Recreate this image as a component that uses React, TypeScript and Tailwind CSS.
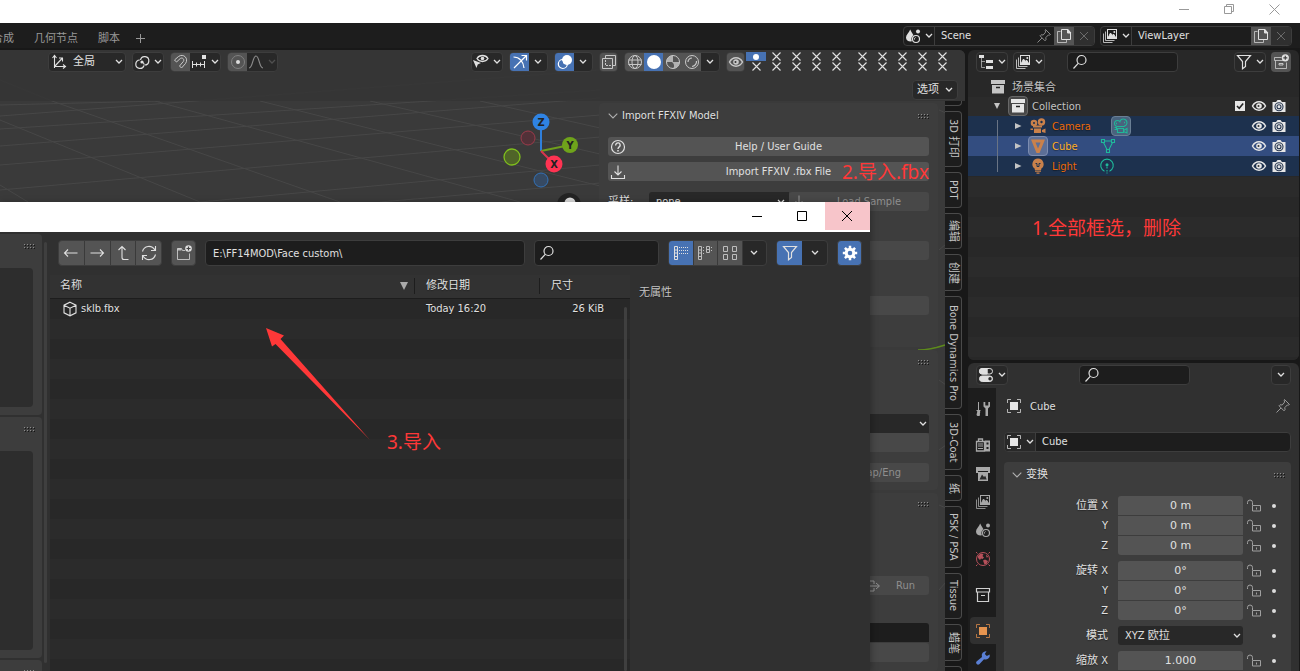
import React from "react";
import type { ReactNode } from "react";

function Icon({ children, className = "" }: { children: ReactNode; className?: string }) {
  return (
    <svg
      viewBox="0 0 16 16"
      width={16}
      height={16}
      fill="none"
      stroke="currentColor"
      strokeWidth="1"
      aria-hidden="true"
      className={"shrink-0 " + className}
    >
      {children}
    </svg>
  );
}

function Chevron({ className = "" }: { className?: string }) {
  return (
    <svg viewBox="0 0 8 6" width="8" height="6" fill="none" stroke="currentColor" strokeWidth="1.3" aria-hidden="true" className={"shrink-0 " + className}>
      <path d="M1 1l3 3 3-3" />
    </svg>
  );
}

const PanelArrow = () => (
  <svg viewBox="0 0 10 6" width="10" height="6" fill="none" stroke="#b0b0b0" strokeWidth="1.1" aria-hidden="true" className="-mr-0.5 shrink-0">
    <path d="M.7 .7L5 5 9.3 .7" />
  </svg>
);

const SearchIcon = () => (
  <Icon>
    <circle cx="9.5" cy="6" r="4.5" strokeWidth="1.2" />
    <path d="M6.2 9.4L1.5 14.5" strokeWidth="1.2" />
  </Icon>
);
const PinIcon = () => (
  <Icon>
    <path d="M9.5 1.5l5 5-1.2.6-1-.1-2.5 2.6.2 2.2-1 1L4 7.8l1-1 2.2.2L9.7 4l-.5-1.2zM6 10l-4.5 4.5" />
  </Icon>
);
const CopyIcon = () => (
  <Icon>
    <path d="M4.5 3.5h-3v11h9v-3" opacity=".7" />
    <path d="M5.5 1.5h6l3 3v7h-9z" />
    <path d="M11.5 1v4H15z" fill="currentColor" />
  </Icon>
);
const CloseIcon = () => (
  <Icon>
    <path d="M4 4l8 8M12 4l-8 8" />
  </Icon>
);
const ScenePic = () => (
  <Icon>
    <path d="M5.2 1.5C6.5 4.5 9 7 9 9.5a3.8 3.8 0 01-3.2 4C3 13.5 1 12 1 9.5 1 7 4 4.5 5.2 1.5z" fill="currentColor" stroke="none" />
    <circle cx="11" cy="11" r="4.6" fill="#1f1f1f" stroke="none" />
    <circle cx="11" cy="11" r="3.5" strokeWidth="1.2" />
    <path d="M9.5 11.5a1.7 1.7 0 011-2" />
    <circle cx="13" cy="3.5" r="2" fill="currentColor" stroke="none" />
  </Icon>
);
const LayersPic = () => (
  <Icon>
    <path d="M1.5 5.5v9h9M3.5 3.5v9h9" opacity=".8" />
    <rect x="5.5" y="1.5" width="9" height="9" />
    <path d="M6 10l2.5-5 1.8 2.5L11.5 6l2.5 4z" fill="currentColor" />
    <circle cx="12.3" cy="4" r="1" fill="currentColor" stroke="none" />
  </Icon>
);
const OutlinerPic = () => (
  <Icon>
    <g fill="currentColor" stroke="none">
      <rect x="1" y="1" width="5" height="3" />
      <rect x="8" y="6" width="7" height="3" />
      <rect x="8" y="12" width="7" height="3" />
    </g>
    <path d="M3.5 4v9.5H7M3.5 7.5H7" opacity=".6" />
  </Icon>
);
const FunnelIcon = () => (
  <Icon>
    <path d="M1.5 1.5h13l-5 6v5l-3 2.2V7.5z" strokeWidth="1.2" />
  </Icon>
);
const ArchiveNewIcon = () => (
  <Icon>
    <path d="M1.5 3.5h7M1.5 3.5v3h12M2.5 6.5v8h11v-6" opacity=".7" />
    <path d="M6 9.5h4v1.5H6z" opacity=".8" />
    <circle cx="12.3" cy="3.8" r="3.6" fill="currentColor" stroke="none" />
    <path d="M12.3 1.8v4M10.3 3.8h4" stroke="#444" strokeWidth="1.2" />
  </Icon>
);
const ArchiveSolid = () => (
  <Icon>
    <path d="M1 1h14v4H1zM2 6h12v8.5H2z" fill="currentColor" stroke="none" />
    <path d="M6 8.5h4" stroke="#222" strokeWidth="1.5" />
  </Icon>
);
const EyeIcon = () => (
  <Icon>
    <path d="M1.5 8c3-5.6 10-5.6 13 0-3 5.6-10 5.6-13 0z" strokeWidth="1.5" />
    <circle cx="8" cy="8" r="2.8" fill="currentColor" stroke="none" />
    <circle cx="7.5" cy="8" r="1" fill="#333" stroke="none" />
  </Icon>
);
const PhotoIcon = () => (
  <Icon>
    <path d="M2 4h3l1.5-2h3L11 4h3.5v10h-13V4z" fill="currentColor" stroke="none" />
    <circle cx="8" cy="8.7" r="4" stroke="#26364f" strokeWidth="1.1" />
    <circle cx="8" cy="8.7" r="2" stroke="#26364f" strokeWidth="1.1" />
  </Icon>
);
const CameraSolid = () => (
  <Icon>
    <g fill="currentColor" stroke="none">
      <circle cx="4" cy="5" r="3.3" />
      <circle cx="11.5" cy="4" r="3.7" />
      <path d="M3 7.5h9V9.5H3zM4 10.5h7V15H4zM12 12l3.5-1.5V15L12 14zM.5 10.500H3V12H.5z" />
    </g>
    <circle cx="4" cy="5" r="1" fill="#1d314e" stroke="none" />
    <circle cx="11.5" cy="4" r="1.2" fill="#1d314e" stroke="none" />
  </Icon>
);
const CameraLine = () => (
  <Icon>
    <path d="M3.5 8.3a3 3 0 113.4-4.6 3.6 3.6 0 116.1 3.4L11 8.5H3.500M4.5 10.5h6v4h-6zM10.5 12.5l3.5-2V15l-3.5-1.5M1.5 9.5h2v2h-2" strokeWidth="1.1" />
    <path d="M3 5.500h1M11 4.500h1" strokeWidth="1.5" />
  </Icon>
);
const MeshSolid = () => (
  <Icon>
    <path d="M1 1.5h14L9.5 15h-3zM5.500 4.500L8 10.500l2.500-6z" fill="currentColor" fillRule="evenodd" stroke="none" />
  </Icon>
);
const MeshLine = () => (
  <Icon>
    <path d="M1.5 1.500h3v3h-3zM11.5 1.500h3v3h-3zM6.5 11.500h3v3h-3zM4.5 3h7M3.5 4.500l3.5 7M12.5 4.500l-3.5 7" strokeWidth="1.1" />
  </Icon>
);
const LightSolid = () => (
  <Icon>
    <path d="M8 .5a5.600 5.600 0 013.200 10.200V12H4.800v-1.300A5.600 5.600 0 018 .5zM5 12.600h6v1.200H5zM6.500 14.500h3v1.200h-3z" fill="currentColor" stroke="none" />
    <path d="M5.500 5.500h1.500v3h2v-3h1.500" stroke="#1d314e" />
  </Icon>
);
const LightLine = () => (
  <Icon>
    <path d="M5.500 13.200A6.300 6.300 0 1110.500 13.200M8 8.500v2M8 12v1.500M8 14.500v1" strokeWidth="1.100" />
    <circle cx="8" cy="6.700" r="1.500" fill="currentColor" stroke="none" />
  </Icon>
);
const ObjectIcon = ({ fill = "#e6e6e6" }: { fill?: string }) => (
  <Icon>
    <path d="M1.5 5V1.5H5M11 1.5h3.5V5M14.5 11v3.5H11M5 14.5H1.5V11" opacity=".75" />
    <rect x="4" y="4" width="8" height="8" fill={fill} stroke="none" />
  </Icon>
);
const LockOpen = () => (
  <Icon className="text-[#a0a0a0]">
    <path d="M1.500 6V4.500a2.500 2.500 0 015 0V7" />
    <path d="M6.500 7.500h8v5.500h-8zM10.500 9.500v2" />
  </Icon>
);
const Arrow = ({ d }: { d: string }) => (
  <Icon>
    <path d={d} strokeWidth="1.1" />
  </Icon>
);
const GlobeIcon = () => (
  <Icon>
    <circle cx="8" cy="8" r="6.5" />
    <ellipse cx="8" cy="8" rx="3" ry="6.5" />
    <path d="M1.5 6h13M1.5 10.5h13" />
  </Icon>
);
const Grip = () => (
  <svg viewBox="0 0 11 5" width="11" height="5" aria-hidden="true" className="shrink-0 text-[#8c8c8c]">
    {[0, 3, 6, 9].map((x) => (
      <g key={x} fill="currentColor">
        <rect x={x} y="0" width="1" height="1" />
        <rect x={x} y="3" width="1" height="1" />
        <rect x={x + 1} y="1" width="1" height="1" fill="#151515" />
        <rect x={x + 1} y="4" width="1" height="1" fill="#151515" />
      </g>
    ))}
  </svg>
);

const BOX = "flex h-5 items-center rounded border border-[#3d3d3d] bg-[#282828]";

function DropButton({ icon, label }: { icon: ReactNode; label: string }) {
  return (
    <button aria-label={label} className="flex h-5 w-8 items-center justify-center gap-1 rounded border border-[#3d3d3d] bg-[#282828]">
      {icon}
      <Chevron />
    </button>
  );
}

function SearchBox({ className, label }: { className: string; label: string }) {
  return (
    <label className={"flex items-center rounded border border-[#3d3d3d] bg-[#1d1d1d] pl-1 " + className}>
      <SearchIcon />
      <input type="search" aria-label={label} className="w-full min-w-0 bg-transparent pl-1 outline-none" />
    </label>
  );
}

function Segment({ label, on, icon, width = "w-[19px]" }: { label: string; on?: boolean; icon: ReactNode; width?: string }) {
  return (
    <button
      aria-label={label}
      aria-pressed={!!on}
      className={"flex h-full items-center justify-center " + width + (on ? " bg-[#4772b3] text-white" : " bg-[#545454] text-[#c8c8c8]")}
    >
      {icon}
    </button>
  );
}

function SegmentMenu({ label }: { label: string }) {
  return (
    <button aria-label={label} className="flex w-[18px] justify-center">
      <Chevron />
    </button>
  );
}

function DataBlock({ icon, name, pin }: { icon: ReactNode; name: string; pin?: boolean }) {
  return (
    <div className="flex h-5 w-48 items-stretch overflow-hidden rounded border border-[#3d3d3d] bg-[#1d1d1d]">
      <button aria-label={name + " list"} className="flex w-[31px] items-center justify-center gap-1 border-r border-[#3d3d3d]">
        {icon}
        <Chevron />
      </button>
      <input aria-label={name} defaultValue={name} className="w-full min-w-0 flex-1 bg-transparent px-1.5 outline-none" />
      {pin && (
        <button aria-label="Pin" className="mr-0.5 text-[#8a8a8a]">
          <PinIcon />
        </button>
      )}
      <button aria-label="New" className="flex w-5 items-center justify-center bg-[#545454]">
        <CopyIcon />
      </button>
      <button aria-label="Remove" className="flex w-5 items-center justify-center bg-[#2f2f2f] text-[#6a6a6a]">
        <CloseIcon />
      </button>
    </div>
  );
}

function LayerGrid({ first }: { first?: boolean }) {
  return (
    <div className="grid grid-cols-5">
      {[0, 1, 2, 3, 4, 5, 6, 7, 8, 9].map((i) => (
        <button
          key={i}
          aria-label={"Layer " + (i + 1)}
          className={"flex h-[9px] w-5 items-center justify-center " + (first && i === 0 ? "bg-[#4772b3]" : "")}
        >
          {first && i === 0 ? (
            <span className="size-1.5 rounded-full bg-white" />
          ) : (
            <svg viewBox="0 0 9 9" width="9" height="9" stroke="currentColor" strokeWidth="1.1" aria-hidden="true">
              <path d="M.5 .5l8 8M8.5 .5l-8 8" />
            </svg>
          )}
        </button>
      ))}
    </div>
  );
}

function TopBar() {
  return (
    <nav className="flex h-[27px] shrink-0 items-center justify-between border-b-2 border-[#181818] bg-[#1d1d1d]">
      <div className="-ml-2 flex items-center gap-5 pt-1.5 text-[#989898]">
        <button className="whitespace-nowrap">合成</button>
        <button className="whitespace-nowrap">几何节点</button>
        <button className="whitespace-nowrap">脚本</button>
        <button aria-label="Add workspace" className="-ml-1">
          <svg viewBox="0 0 9 9" width="9" height="9" stroke="currentColor" aria-hidden="true">
            <path d="M4.5 0v9M0 4.5h9" />
          </svg>
        </button>
      </div>
      <div className="flex gap-[5px] pr-2">
        <DataBlock icon={<ScenePic />} name="Scene" pin />
        <DataBlock icon={<LayersPic />} name="ViewLayer" />
      </div>
    </nav>
  );
}

function ViewportHeader() {
  return (
    <header className="relative h-[51px] shrink-0 bg-[#353535]/90 pt-0.5">
      <div className="flex items-center justify-between pr-[13px] pl-12">
        <div className="flex gap-1.5">
          <div className={BOX + " relative w-[78px]"}>
            <Icon className="ml-0.5">
              <path d="M3.5 14V2M1.5 4l2-2.500 2 2.500M3.500 12.500H14M12 10.500l2.500 2-2.500 2M4 12l7-7.500M8 4h3.500v3.500" strokeWidth="1.1" />
            </Icon>
            <select aria-label="Transform orientation" className="absolute inset-0 w-full appearance-none bg-transparent pl-6 outline-none">
              <option>全局</option>
            </select>
            <Chevron className="mr-0.5 ml-auto" />
          </div>
          <DropButton
            label="Pivot"
            icon={
              <Icon>
                <path d="M5.8 6a4.200 4.200 0 104.200 5.500M6.500 6a4.200 4.200 0 114 5M10 10.500a4.200 4.200 0 00-.8-2" strokeWidth="1.200" />
                <circle cx="8" cy="8" r="1.6" fill="currentColor" stroke="none" />
              </Icon>
            }
          />
          <div className={BOX + " overflow-hidden"}>
            <Segment
              label="Snap"
              icon={
                <Icon>
                  <path d="M1.500 6l4-3.500c5-3.500 10.500 2 7 7L8.500 14l-2-2 3.800-4.500c1.500-2-.8-4.500-3-3L3.500 8z" />
                </Icon>
              }
            />
            <button aria-label="Snap options" className="flex w-[30px] items-center justify-center gap-1">
              <Icon>
                <path d="M1.5 7v7M13.5 7v7M1.5 10.500h12M5.500 8.500v4M9.500 8.500v4" />
                <rect x="11" y="1" width="4" height="4" fill="currentColor" stroke="none" />
              </Icon>
              <Chevron />
            </button>
          </div>
          <div className={BOX + " overflow-hidden"}>
            <Segment
              label="Proportional editing"
              icon={
                <Icon>
                  <circle cx="8" cy="8" r="6.5" stroke="#808080" />
                  <circle cx="8" cy="8" r="2" fill="#ddd" stroke="none" />
                </Icon>
              }
            />
            <button aria-label="Falloff" className="flex w-[30px] items-center justify-center gap-1 text-[#8a8a8a]">
              <Icon>
                <path d="M1 14c4 0 3.500-12 7-12s3 12 7 12" strokeWidth="1.2" />
              </Icon>
              <Chevron className="opacity-40" />
            </button>
          </div>
        </div>

        <div className="flex">
          <div className="mr-px flex gap-1.5">
            <DropButton
              label="Selectability"
              icon={
                <Icon>
                  <path d="M4 4.500c2.500-4 8.500-4 11 0-2.500 4-8.500 4-11 0z" strokeWidth="1.3" />
                  <circle cx="9.500" cy="4.500" r="1.800" fill="currentColor" stroke="none" />
                  <path d="M0 6l8 3-3.300 1.500L3.500 14z" fill="currentColor" stroke="none" />
                </Icon>
              }
            />
            <div className={BOX + " overflow-hidden"}>
              <Segment
                on
                label="Gizmos"
                icon={
                  <Icon>
                    <path d="M1.500 3c6 0 10 4.500 10.500 11M2 14L14 2M9.500 1.500h5v5" strokeWidth="1.2" />
                  </Icon>
                }
              />
              <SegmentMenu label="Gizmo options" />
            </div>
            <div className={BOX + " overflow-hidden"}>
              <Segment
                on
                label="Overlays"
                icon={
                  <Icon>
                    <circle cx="10" cy="6" r="5" fill="currentColor" stroke="none" />
                    <circle cx="5.800" cy="10" r="4.500" strokeWidth="1.2" />
                    <path d="M5.500 7.500a4 4 0 003 4.500" stroke="#4772b3" />
                  </Icon>
                }
              />
              <SegmentMenu label="Overlay options" />
            </div>
            <div className={BOX + " overflow-hidden"}>
              <Segment
                label="X-ray"
                width="w-[17px]"
                icon={
                  <Icon>
                    <path d="M4.500 1.500h10v10h-3M4.500 1.500v3" />
                    <path d="M1.500 4.500h10v10h-10z" />
                    <path d="M4.500 6v5.500H10" strokeDasharray="2 1" />
                  </Icon>
                }
              />
            </div>
            <div className={BOX + " overflow-hidden"}>
              <Segment label="Wireframe" icon={<GlobeIcon />} />
              <Segment
                on
                label="Solid"
                icon={
                  <Icon>
                    <circle cx="8" cy="8" r="7" fill="currentColor" stroke="none" />
                  </Icon>
                }
              />
              <Segment
                label="Material preview"
                icon={
                  <Icon>
                    <circle cx="8" cy="8" r="6.5" />
                    <path d="M8 1.500V8h6.500A6.500 6.500 0 018 14.500c2-2 1-5-1-6.500H1.500A6.500 6.500 0 018 1.500z" fill="currentColor" opacity=".8" stroke="none" />
                  </Icon>
                }
              />
              <Segment
                label="Rendered"
                icon={
                  <Icon>
                    <circle cx="8" cy="8" r="6.5" />
                    <path d="M12.500 7A5 5 0 018 12.500M4 8a4 4 0 014-4" strokeWidth="1.2" />
                  </Icon>
                }
              />
              <SegmentMenu label="Shading options" />
            </div>
            <div className={BOX + " overflow-hidden"}>
              <Segment label="Visibility" width="w-[17px]" icon={<EyeIcon />} />
            </div>
          </div>
          <div className="flex gap-1.5">
            <LayerGrid first />
            <LayerGrid />
          </div>
        </div>
      </div>
      <div className="mt-2 flex justify-end pr-[7px]">
        <button className="flex h-5 w-[46px] items-center justify-center gap-1.5 rounded border border-[#3d3d3d] bg-[#282828] whitespace-nowrap">
          选项
          <Chevron />
        </button>
      </div>
    </header>
  );
}

function ViewportScene() {
  return (
    <svg className="absolute inset-0 h-full w-full" aria-hidden="true">
      <g stroke="#474747" strokeWidth="1" fill="none">
        <path d="M0 55L160 51M0 66L600 20M0 79L600 40M0 96L600 48M0 115L600 65M0 140L600 87M200 152L600 115M380 152L600 133" />
        <path d="M0 70L200 152M52 51L340 152M155 51L520 152M260 51L600 136M370 51L600 104M480 51L600 78M0 135L28 152M0 30L52 51" />
        <path d="M939 60l7 3M939 200l7-6M939 330l7 5M939 400l7-5M939 455l7 3M939 540l7-8" />
      </g>
      <path d="M918 300c10 0 18-2 27-5" stroke="#5d8a1c" fill="none" strokeWidth="1.5" />
      <g strokeWidth="2" fill="none">
        <path d="M541 101V72" stroke="#2f7fdb" />
        <path d="M541 101l29-6" stroke="#6f9f1c" />
        <path d="M541 101l13 13" stroke="#d8354f" />
      </g>
      <circle cx="528" cy="88" r="7" fill="#523138" stroke="#9c3a4a" />
      <circle cx="512" cy="107" r="8" fill="#4f6428" stroke="#7fbf1d" strokeWidth="1.3" />
      <circle cx="541" cy="130" r="7" fill="#364a63" stroke="#3372b8" />
      <circle cx="541" cy="72" r="8.5" fill="#2f83e3" />
      <circle cx="570" cy="95" r="8" fill="#6fa31b" />
      <circle cx="554" cy="114" r="8.5" fill="#ff3352" />
      <g fontSize="11" fontWeight="bold" textAnchor="middle" fill="#222" className="[text-shadow:none]">
        <text x="541" y="76">Z</text>
        <text x="570" y="99">Y</text>
        <text x="554" y="118">X</text>
      </g>
      <circle cx="569" cy="155" r="12" fill="#232323" />
      <circle cx="570" cy="153" r="5.5" fill="#dcdcdc" />
    </svg>
  );
}

function WideButton({ icon, label, off }: { icon?: ReactNode; label?: string; off?: boolean }) {
  return (
    <button
      aria-label={label || "Option"}
      className={"flex h-[19px] w-full items-center rounded-[3px] " + (off ? "bg-[#484848] text-[#8f8f8f]" : "bg-[#545454]")}
    >
      <span className="flex w-5 justify-center">{icon}</span>
      <span className="flex-1 text-center">{label}</span>
    </button>
  );
}

const downloadIcon = (
  <Icon>
    <path d="M8 1.500v9M4.500 7.500L8 11l3.500-3.500M1.500 11v3.500h13V11" strokeWidth="1.1" />
  </Icon>
);

const sideTabs: [string, string][] = [
  ["3D 打印", "h-14"],
  ["PDT", "h-9"],
  ["编辑", "h-9"],
  ["创建", "h-[37px]"],
  ["Bone Dynamics Pro", "h-[113px]"],
  ["3D-Coat", "h-14"],
  ["纸", "h-[26px]"],
  ["PSK / PSA", "h-[62px]"],
  ["Tissue", "h-[46px]"],
  ["蜡笔", "h-[37px]"],
];

function Viewport() {
  return (
    <main className="relative flex min-w-0 flex-1 flex-col overflow-hidden rounded-tr-md bg-[#3a3a3a]">
      <ViewportScene />
      <ViewportHeader />
      <div className="relative flex min-h-0 flex-1 justify-end">
        <div className="flex w-[339px] flex-col gap-[3px] pt-0.5">
          <section className="rounded bg-[#3d3d3d] px-[9px] pb-8">
            <h2 className="flex h-[26px] items-center gap-1.5">
              <PanelArrow />
              <span className="flex-1">Import FFXIV Model</span>
              <Grip />
            </h2>
            <div className="flex flex-col gap-1.5 pt-2">
              <WideButton
                label="Help / User Guide"
                icon={
                  <Icon>
                    <circle cx="8" cy="8" r="6.5" strokeWidth="1.2" />
                    <path d="M5.800 6.500a2.200 2.200 0 114 .8C9 8.300 8 8.500 8 10" strokeWidth="1.4" />
                    <path d="M8 11v1.500" strokeWidth="1.5" />
                  </Icon>
                }
              />
              <WideButton label="Import FFXIV .fbx File" icon={downloadIcon} />
            </div>
            <div className="flex items-center pt-[11px]">
              <label htmlFor="sample" className="w-[41px] whitespace-nowrap">采样:</label>
              <div className="relative flex flex-1 items-center">
                <select id="sample" className="h-[19px] w-full appearance-none rounded-l-[3px] bg-[#282828] pl-[7px] outline-none">
                  <option>none</option>
                </select>
                <Chevron className="absolute right-1" />
              </div>
              <div className="w-[140px]">
                <WideButton off label="Load Sample" icon={downloadIcon} />
              </div>
            </div>
            <div className="pt-[30px]">
              <WideButton off />
            </div>
            <div className="pt-9">
              <WideButton off />
            </div>
          </section>
          <section className="rounded bg-[#3d3d3d] px-[9px] pb-2">
            <div className="flex h-6 items-center justify-end">
              <Grip />
            </div>
            <div className="relative mt-10 flex items-center">
              <select aria-label="Preset" className="h-[19px] w-full appearance-none rounded-t-[3px] bg-[#282828]" />
              <Chevron className="absolute right-0.5" />
            </div>
            <WideButton off />
            <div className="pt-[11px]">
              <button className="h-[19px] w-full rounded-[3px] bg-[#484848] pr-7 text-right text-[#8f8f8f]">Remap/Eng</button>
            </div>
          </section>
          <section className="flex-1 rounded bg-[#3d3d3d] px-[9px]">
            <div className="flex h-[23px] items-center justify-end">
              <Grip />
            </div>
            <button className="mt-[60px] flex h-[19px] w-full items-center justify-end gap-3.5 rounded-[3px] bg-[#484848] pr-3.5 text-[#8f8f8f]">
              <Icon>
                <path d="M2 3h6v3M2 13h6v-3M1 8h12M10 5l3.500 3-3.500 3" />
              </Icon>
              Run
            </button>
            <input aria-label="Script" className="mt-7 block h-[19px] w-full rounded-t-[3px] bg-[#1d1d1d]" />
            <div className="pt-px">
              <WideButton off />
            </div>
          </section>
        </div>
        <div className="ml-[7px] flex w-5 flex-col gap-[5px] overflow-hidden bg-[#181818]" role="tablist">
          <div className="h-[5px] w-[17px] shrink-0 rounded-br border-r border-b border-[#4a4a4a]" />
          {sideTabs.map(([name, height]) => (
            <button
              key={name}
              role="tab"
              className={"flex w-[17px] shrink-0 items-center justify-center rounded-r border border-l-0 border-[#4a4a4a] bg-[#1d1d1d] whitespace-nowrap text-[#c4c4c4] [writing-mode:vertical-rl] [text-orientation:sideways] " + height}
            >
              {name}
            </button>
          ))}
          <div className="h-5 w-[17px] shrink-0 rounded-tr border-t border-r border-[#4a4a4a]" />
        </div>
      </div>
    </main>
  );
}

function VisibilityToggles() {
  return (
    <>
      <button aria-label="Hide in viewport" className="ml-1">
        <EyeIcon />
      </button>
      <button aria-label="Disable in renders" className="ml-1">
        <PhotoIcon />
      </button>
    </>
  );
}

function Outliner() {
  const items = [
    { name: "Camera", icon: <CameraSolid />, data: <CameraLine />, row: "bg-[#1d314e]", text: "text-[#ec6a08]", badge: "", dataBox: "ml-5 rounded border border-[#6a7f95] bg-[#49637e]" },
    { name: "Cube", icon: <MeshSolid />, data: <MeshLine />, row: "bg-[#334d80]", text: "text-[#ffaf29]", badge: "rounded border border-[#7c8cb0] bg-[#5c6f97]", dataBox: "ml-5" },
    { name: "Light", icon: <LightSolid />, data: <LightLine />, row: "bg-[#1d314e]", text: "text-[#ec6a08]", badge: "", dataBox: "ml-5" },
  ];
  return (
    <section className="flex h-[310px] shrink-0 flex-col overflow-hidden rounded-md bg-[#282828]">
      <div className="flex h-[27px] shrink-0 items-start pt-0.5 pr-2 pl-2">
        <DropButton label="Editor type" icon={<OutlinerPic />} />
        <div className="ml-[5px]">
          <DropButton label="Display mode" icon={<LayersPic />} />
        </div>
        <SearchBox label="Filter outliner" className="ml-[22px] h-5 w-[111px]" />
        <div className="mr-[5px] ml-auto">
          <DropButton label="Filter" icon={<FunnelIcon />} />
        </div>
        <button aria-label="New collection" className="flex size-5 items-center justify-center rounded bg-[#545454]">
          <ArchiveNewIcon />
        </button>
      </div>
      <div className="flex-1 bg-[repeating-linear-gradient(#282828_0_20px,#2b2b2b_20px_40px)] text-[#c4c4c4]">
        <div className="flex h-[19px] items-center pl-[22px]">
          <ArchiveSolid />
          <span className="ml-1.5 pt-0.5">场景集合</span>
        </div>
        <div className="flex h-5 items-center pr-3 pl-[25px]">
          <svg viewBox="0 0 8 8" width="8" height="8" fill="currentColor" aria-hidden="true">
            <path d="M1 1h6L4 7z" />
          </svg>
          <span className="ml-[7px] flex size-5 items-center justify-center rounded border border-[#686868] bg-[#484848] text-[#e6e6e6]">
            <ArchiveSolid />
          </span>
          <span className="ml-1 flex-1 pt-0.5">Collection</span>
          <span className="flex items-center text-[#e6e6e6]">
            <span className="relative mr-0.5 flex">
              <input type="checkbox" defaultChecked aria-label="Collection enabled" className="size-2.5 appearance-none bg-[#e6e6e6]" />
              <svg viewBox="0 0 10 10" width="10" height="10" fill="none" stroke="#222" strokeWidth="1.6" className="pointer-events-none absolute inset-0" aria-hidden="true">
                <path d="M2 5l2.200 2.200L8.200 2.500" />
              </svg>
            </span>
            <VisibilityToggles />
          </span>
        </div>
        {items.map((item, index) => (
          <div key={item.name} className={"flex h-5 items-center pr-3 pl-[29px] " + item.row}>
            <span className={"w-px bg-[#6a7484] " + (index === 0 ? "mt-1 h-4" : index === 2 ? "mb-1 h-4" : "h-5")} />
            <svg viewBox="0 0 8 8" width="8" height="8" fill="currentColor" className="ml-4" aria-hidden="true">
              <path d="M1 1l6.500 3L1 7z" />
            </svg>
            <span className={"ml-1.5 flex size-5 items-center justify-center text-[#c9814b] " + item.badge}>{item.icon}</span>
            <span className={"ml-1 pt-0.5 " + item.text}>{item.name}</span>
            <span className={"flex size-5 items-center justify-center text-[#1fb89a] " + item.dataBox}>{item.data}</span>
            <span className="ml-auto flex items-center text-[#e6e6e6]">
              <VisibilityToggles />
            </span>
          </div>
        ))}
      </div>
    </section>
  );
}

const propertyTabs: { name: string; height: string; color: string; icon: ReactNode; active?: boolean }[] = [
  {
    name: "Tool",
    height: "h-[42px]",
    color: "text-[#a8a8a8]",
    icon: (
      <Icon>
        <path d="M3.500 1v8M1.500 9.500h4" />
        <path d="M3.500 9.500c2 0 2 1.500 1.500 2.500s1 3-1.500 3-2-2-1.500-3-.5-2.500 1.500-2.500z" fill="currentColor" stroke="none" />
        <path d="M8.500 1v4.500l2 2V15H13V7.500l2-2V1h-1.700v3.500h-3V1z" fill="currentColor" stroke="none" />
      </Icon>
    ),
  },
  {
    name: "Render",
    height: "h-[30px]",
    color: "text-[#a8a8a8]",
    icon: (
      <Icon>
        <path d="M1.500 4.500h8v9.500h-8zM3.500 4V2h4v2" strokeWidth="1.300" />
        <path d="M3 7h5M3 9h5M3 11.500h5" />
        <path d="M10 3.500h5V14.500h-5z" fill="currentColor" stroke="none" />
        <path d="M11.500 5.500h2v2h-2zM11.500 10h2v2h-2z" fill="#1d1d1d" stroke="none" />
      </Icon>
    ),
  },
  {
    name: "Output",
    height: "h-7",
    color: "text-[#a8a8a8]",
    icon: (
      <Icon>
        <path d="M1 1h14v6H1zM3 7h10v8H3z" fill="currentColor" stroke="none" />
        <path d="M3 5.500h10" stroke="#1d1d1d" />
        <path d="M4.500 13.500l2.500-5 2 2.500 1.200-1.200 1.500 3.700z" fill="#2a2a2a" stroke="none" />
      </Icon>
    ),
  },
  { name: "View layer", height: "h-7", color: "text-[#a8a8a8]", icon: <LayersPic /> },
  { name: "Scene", height: "h-7", color: "text-[#a8a8a8]", icon: <ScenePic /> },
  {
    name: "World",
    height: "h-[29px]",
    color: "text-[#b5505a]",
    icon: (
      <Icon>
        <circle cx="8" cy="8" r="6.500" />
        <path d="M2.500 5.500L5.500 2.500 8.500 3 7.500 5 9 6.500 7.500 8 6 7.500 5 9 3.500 7.500zM8 9.500l2-1 3 1.500-1.500 3-2 .5zM11 3.500l2.500 2.500-2 .5z" fill="currentColor" stroke="none" />
        <path d="M1 1l1.500 1.500M15 1l-1.500 1.500M1 15l1.500-1.500M15 15l-1.500-1.500" />
      </Icon>
    ),
  },
  {
    name: "Collection",
    height: "h-11",
    color: "text-[#d0d0d0]",
    icon: (
      <Icon>
        <path d="M1.500 1.500h13V5h-13zM2.500 5v9.500h11V5M6 8.500h4" strokeWidth="1.2" />
      </Icon>
    ),
  },
  { name: "Object", height: "h-[27px]", color: "text-[#e08c4a]", icon: <ObjectIcon fill="#e6944f" />, active: true },
  {
    name: "Modifiers",
    height: "h-7",
    color: "text-[#5a7fd4]",
    icon: (
      <Icon>
        <path d="M14.800 4.500A4.300 4.300 0 019 9.200L4.300 14.300a2 2 0 01-2.800-2.800L7 7A4.300 4.300 0 0111.500 1.200L9.800 4l2 2z" fill="currentColor" stroke="none" />
      </Icon>
    ),
  },
];

function VectorRows({ title, value, axes }: { title: string; value: string; axes: string[] }) {
  return (
    <div className="flex flex-col gap-px">
      {axes.map((axis, i) => {
        const id = title + axis;
        return (
          <div key={axis} className="flex h-[19px] items-center">
            <label htmlFor={id} className="w-[104px] text-right">
              {i === 0 ? title + " " + axis : axis}
            </label>
            <input
              id={id}
              defaultValue={value}
              className={"ml-2.5 h-[19px] w-[125px] min-w-0 flex-1 bg-[#545454] text-center outline-none font-['DejaVu_Sans',sans-serif] " + (i === 0 ? "rounded-t-[3px]" : i === 2 ? "rounded-b-[3px]" : "")}
            />
            <button aria-label={"Lock " + id} className="ml-[3px]">
              <LockOpen />
            </button>
            <button aria-label={"Animate " + id} className="mr-[13px] ml-2 flex size-2 items-center justify-center">
              <span className="size-1 rounded-full bg-[#dcdcdc]" />
            </button>
          </div>
        );
      })}
    </div>
  );
}

function Properties() {
  const axes = ["X", "Y", "Z"];
  return (
    <section className="flex min-h-0 flex-1 flex-col overflow-hidden rounded-t-md bg-[#303030]">
      <div className="flex h-[25px] shrink-0 items-start pt-0.5 pr-2 pl-2">
        <DropButton
          label="Editor type"
          icon={
            <Icon>
              <rect x="1.500" y="1.500" width="13" height="5.500" rx="2.700" />
              <rect x="1.500" y="9" width="13" height="5.500" rx="2.700" fill="currentColor" />
              <path d="M4.200 1.500h5V7h-5a2.700 2.700 0 010-5.500z" fill="currentColor" />
              <circle cx="12" cy="11.700" r="1.700" fill="#282828" stroke="none" />
            </Icon>
          }
        />
        <SearchBox label="Search properties" className="ml-[71px] h-5 w-[111px]" />
        <button aria-label="Options" className="ml-auto flex size-5 items-center justify-center rounded border border-[#3d3d3d] bg-[#282828]">
          <Chevron />
        </button>
      </div>
      <div className="flex min-h-0 flex-1">
        <div className="flex w-7 shrink-0 flex-col bg-[#1d1d1d] pl-0.5" role="tablist">
          {propertyTabs.map((tab) => (
            <button
              key={tab.name}
              role="tab"
              aria-label={tab.name}
              aria-selected={!!tab.active}
              className={"flex shrink-0 items-center justify-center " + tab.height + " " + tab.color + (tab.active ? " rounded-l bg-[#303030]" : "")}
            >
              {tab.icon}
            </button>
          ))}
        </div>
        <div className="min-w-0 flex-1 pr-2 pl-2">
          <div className="flex h-9 items-center pl-0.5">
            <ObjectIcon />
            <span className="ml-2 flex-1 pt-px">Cube</span>
            <button aria-label="Pin" className="text-[#999]">
              <PinIcon />
            </button>
          </div>
          <div className="mt-2 flex h-5 items-stretch rounded border border-[#3d3d3d] bg-[#1d1d1d]">
            <button aria-label="Object list" className="flex w-[31px] items-center justify-center gap-1 rounded-l border-r border-[#3d3d3d] bg-[#282828]">
              <ObjectIcon />
              <Chevron />
            </button>
            <input aria-label="Object name" defaultValue="Cube" className="min-w-0 flex-1 bg-transparent px-1.5 outline-none" />
          </div>
          <div className="mt-2.5 h-full rounded-t bg-[#3d3d3d]">
            <h2 className="flex h-[26px] items-center gap-1.5 pr-1.5 pl-2">
              <PanelArrow />
              <span className="flex-1">变换</span>
              <Grip />
            </h2>
            <div className="flex flex-col gap-1.5 pt-2">
              <VectorRows title="位置" value="0 m" axes={axes} />
              <VectorRows title="旋转" value="0°" axes={axes} />
              <div className="flex h-[19px] items-center">
                <label htmlFor="mode" className="w-[104px] text-right">模式</label>
                <div className="relative ml-2.5 flex flex-1 items-center">
                  <select id="mode" className="h-[19px] w-full appearance-none rounded-[3px] bg-[#282828] pl-[7px] outline-none">
                    <option>XYZ 欧拉</option>
                  </select>
                  <Chevron className="absolute right-0.5" />
                </div>
                <button aria-label="Animate mode" className="mr-[13px] ml-[27px] flex size-2 items-center justify-center">
                  <span className="size-1 rounded-full bg-[#dcdcdc]" />
                </button>
              </div>
              <VectorRows title="缩放" value="1.000" axes={["X"]} />
            </div>
          </div>
        </div>
      </div>
    </section>
  );
}

function SidePanel({ height }: { height: string }) {
  return (
    <div className={"flex shrink-0 flex-col rounded-r bg-[#3d3d3d] pr-[9px] pb-2 " + height}>
      <div className="-mr-0.5 flex h-[34px] shrink-0 items-start justify-end pt-2.5">
        <Grip />
      </div>
      <div className="flex-1 rounded-r bg-[#2d2d2d]" />
    </div>
  );
}

const TOOL = "flex h-full items-center justify-center";

function FileDialog() {
  return (
    <div role="dialog" aria-label="Import" className="absolute top-[202px] bottom-0 left-0 flex w-[870px] flex-col bg-[#303030] shadow-[2px_0_6px_rgba(0,0,0,0.25)]">
      <div className="flex h-[30px] shrink-0 justify-end bg-white pb-0.5 text-black">
        <button aria-label="Minimize" className="flex w-[45px] items-center justify-center">
          <svg viewBox="0 0 11 11" width="11" height="11" stroke="currentColor" aria-hidden="true"><path d="M0 5.500h10" /></svg>
        </button>
        <button aria-label="Maximize" className="flex w-[45px] items-center justify-center">
          <svg viewBox="0 0 11 11" width="11" height="11" fill="none" stroke="currentColor" aria-hidden="true"><path d="M.5 .5h9v9h-9z" /></svg>
        </button>
        <button aria-label="Close" className="flex w-[45px] items-center justify-center bg-[#f7c5ca]">
          <svg viewBox="0 0 11 11" width="11" height="11" stroke="currentColor" aria-hidden="true"><path d="M0 0l10 10M10 0L0 10" /></svg>
        </button>
      </div>
      <div className="flex min-h-0 flex-1">
        <aside className="flex w-[50px] shrink-0 gap-0.5 pt-0.5">
          <div className="flex w-[42px] flex-col gap-0.5 overflow-hidden">
            <SidePanel height="h-[181px]" />
            <SidePanel height="h-[241px]" />
            <SidePanel height="h-[60px]" />
          </div>
          <div className="mt-2 mb-2 w-[3px] rounded bg-[#3f3f3f]" />
        </aside>
        <div className="flex min-w-0 flex-1 flex-col">
          <div className="flex h-[43px] shrink-0 items-start gap-[9px] pt-2 pr-2 pl-2">
            <div className="flex h-[26px] w-[104px] divide-x divide-[#3a3a3a] overflow-hidden rounded border border-[#3d3d3d] bg-[#545454]">
              <button aria-label="Back" className={TOOL + " flex-1"}><Arrow d="M14.500 8h-13M5 4.500L1.500 8 5 11.500" /></button>
              <button aria-label="Forward" className={TOOL + " flex-1"}><Arrow d="M1.500 8h13M11 4.500l3.500 3.500-3.500 3.500" /></button>
              <button aria-label="Parent directory" className={TOOL + " flex-1"}><Arrow d="M13.500 14.500H9c-1.500 0-2-.8-2-2v-11M3.500 5L7 1.500 10.500 5" /></button>
              <button aria-label="Refresh" className={TOOL + " flex-1"}><Arrow d="M1.500 6.500C3 .5 10.500-.5 14 5M14.500 1v4.500H10M14.500 9.500C13 15.500 5.500 16.500 2 11M1.500 15v-4.500H6" /></button>
            </div>
            <button aria-label="New folder" className="flex h-[26px] w-[25px] items-center justify-center rounded border border-[#3d3d3d] bg-[#545454]">
              <Icon>
                <path d="M1.500 14.500v-11h4l1 2h2.500M1.500 14.500h12V8.500" opacity=".75" />
                <path d="M1.500 3.500h4v2h-4z" fill="currentColor" stroke="none" opacity=".75" />
                <circle cx="12.500" cy="3.500" r="3.300" fill="currentColor" stroke="none" />
                <path d="M12.500 1.500v4M10.500 3.500h4" stroke="#444" strokeWidth="1.2" />
              </Icon>
            </button>
            <input aria-label="Path" defaultValue="E:\FF14MOD\Face custom\" className="h-[26px] min-w-0 flex-1 rounded border border-[#3d3d3d] bg-[#1d1d1d] px-[7px] outline-none" />
            <SearchBox label="Search files" className="h-[26px] w-[125px]" />
            <div className="flex h-[26px] w-[99px] divide-x divide-[#3a3a3a] overflow-hidden rounded border border-[#3d3d3d] bg-[#282828]">
              <button aria-label="Vertical list" className={TOOL + " flex-1 bg-[#4772b3]"}>
                <Icon><path d="M1.500 1.500h3v13h-3zM1.500 5h3M1.500 8h3M1.500 11.500h3" /><path d="M6 2.500h10M6 5.500h10M6 8.500h10" strokeDasharray="1 1" /></Icon>
              </button>
              <button aria-label="Horizontal list" className={TOOL + " flex-1 bg-[#545454] text-[#bdbdbd]"}>
                <Icon><path d="M1.500 1.500h3v13h-3zM1.500 5h3M1.500 8h3M1.500 11.500h3M9.500 1.500h3v6h-3zM9.500 4.500h3" /><path d="M6.500 2v8M14.500 2v6" strokeDasharray="1 2" /></Icon>
              </button>
              <button aria-label="Thumbnails" className={TOOL + " flex-1 bg-[#545454] text-[#bdbdbd]"}>
                <Icon><path d="M1.500 1.500h4v5h-4zM10.500 1.500h4v5h-4zM1.500 9.500h4v5h-4zM10.500 9.500h4v5h-4z" /></Icon>
              </button>
              <button aria-label="Display options" className={TOOL + " flex-1"}><Chevron /></button>
            </div>
            <div className="flex h-[26px] w-[52px] overflow-hidden rounded border border-[#3d3d3d] bg-[#282828]">
              <button aria-label="Filter" className={TOOL + " flex-1 bg-[#4772b3]"}><FunnelIcon /></button>
              <button aria-label="Filter options" className={TOOL + " flex-1"}><Chevron /></button>
            </div>
            <button aria-label="Settings" className="flex h-[26px] w-[25px] items-center justify-center rounded border border-[#3d3d3d] bg-[#4772b3] text-white">
              <Icon>
                <circle cx="8" cy="8" r="3.800" strokeWidth="3" />
                <path d="M8 .8v3M8 12.200v3M.8 8h3M12.200 8h3M2.900 2.900L5 5M11 11l2.100 2.100M13.100 2.900L11 5M5 11l-2.100 2.100" strokeWidth="2.5" />
              </Icon>
            </button>
          </div>
          <div className="flex min-h-0 flex-1">
            <div className="relative min-w-0 flex-1 bg-[repeating-linear-gradient(#282828_0_20px,#2b2b2b_20px_40px)] bg-[position:0_24px]">
              <table className="w-full table-fixed border-collapse text-left">
                <thead>
                  <tr className="h-[23px] border-b border-[#1d1d1d] bg-[#323232]">
                    <th className="pl-2.5 font-normal">
                      <span className="flex items-center justify-between pr-1.5">
                        名称
                        <svg viewBox="0 0 8 8" width="8" height="8" fill="#aaa" aria-hidden="true"><path d="M0 0h8L4 8z" /></svg>
                      </span>
                    </th>
                    <th className="w-[125px] font-normal">
                      <span className="block border-l border-[#1d1d1d] pl-[11px]">修改日期</span>
                    </th>
                    <th className="w-[91px] font-normal">
                      <span className="block border-l border-[#1d1d1d] pl-[11px]">尺寸</span>
                    </th>
                  </tr>
                </thead>
                <tbody>
                  <tr className="h-[21px]">
                    <td className="pl-3">
                      <span className="flex items-center gap-[3px]">
                        <Icon><path d="M8 1.200l6 3v7.600l-6 3-6-3V4.200zM2 4.200l6 3 6-3M8 7.200v7.600" strokeWidth="1.1" /></Icon>
                        sklb.fbx
                      </span>
                    </td>
                    <td className="pl-3">Today 16:20</td>
                    <td className="pr-[26px] text-right">26 KiB</td>
                  </tr>
                </tbody>
              </table>
              <div className="absolute top-8 right-[3px] bottom-0 w-[3px] rounded bg-[#3f3f3f]" />
            </div>
            <aside className="w-60 shrink-0 pt-2.5 pl-[9px] text-[#c4c4c4]">无属性</aside>
          </div>
        </div>
      </div>
    </div>
  );
}

function Note({ children, place }: { children: ReactNode; place: string }) {
  return (
    <p className={"pointer-events-none absolute text-[19px] leading-7 whitespace-nowrap text-[#ff3838] [text-shadow:none] font-['Noto_Sans','Noto_Sans_CJK_SC',sans-serif] " + place}>
      {children}
    </p>
  );
}

export default function App() {
  return (
    <div className="relative flex h-screen flex-col overflow-hidden bg-[#181818] text-[11px] leading-4 text-[#e0e0e0] font-['DejaVu_Sans_Condensed','DejaVu_Sans','Noto_Sans_CJK_SC',sans-serif] [text-shadow:0_1px_1px_rgba(0,0,0,0.4)]">
      <div className="flex h-[23px] shrink-0 items-center justify-end bg-white pr-[3px] pb-1 text-[#999]">
        <button aria-label="Minimize window" className="flex w-[45px] justify-center">
          <svg viewBox="0 0 11 11" width="11" height="11" stroke="currentColor" aria-hidden="true"><path d="M0 5.500h10" /></svg>
        </button>
        <button aria-label="Restore window" className="flex w-[45px] justify-center">
          <svg viewBox="0 0 11 11" width="11" height="11" fill="none" stroke="currentColor" aria-hidden="true"><path d="M.5 2.500h7v7h-7zM2.500 2.500v-2h7v7h-2" /></svg>
        </button>
        <button aria-label="Close window" className="flex w-[45px] justify-center">
          <svg viewBox="0 0 11 11" width="11" height="11" stroke="currentColor" aria-hidden="true"><path d="M.5 .5l10 10M10.500 .5l-10 10" /></svg>
        </button>
      </div>
      <TopBar />
      <div className="flex min-h-0 flex-1 gap-[3px] pr-px">
        <Viewport />
        <div className="flex w-[331px] shrink-0 flex-col gap-[3px]">
          <Outliner />
          <Properties />
        </div>
      </div>
      <FileDialog />
      <Note place="top-[214px] left-[1032px]">1.全部框选，删除</Note>
      <Note place="top-[158px] left-[842px]">2.导入.fbx</Note>
      <Note place="top-[428px] left-[387px]">3.导入</Note>
      <svg className="pointer-events-none absolute top-[328px] left-[266px]" width="104" height="112" viewBox="0 0 104 112" aria-hidden="true">
        <path d="M0 0l18 7.500-3.500 3.500L104 112 9.500 16 6 18.500z" fill="#ff3838" />
      </svg>
    </div>
  );
}
